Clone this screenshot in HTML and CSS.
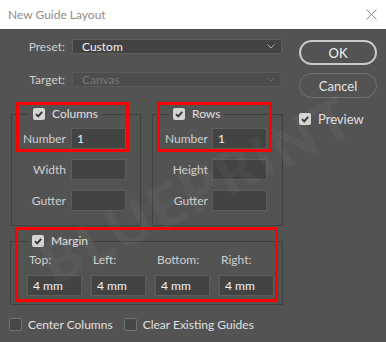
FILE: index.html
```html
<!DOCTYPE html>
<html>
<head>
<meta charset="utf-8">
<link rel="stylesheet" href="styles.css">
</head>
<body>
<div class="titlebar">
  <span class="title">New Guide Layout</span>
  <svg class="close" width="11" height="11" viewBox="0 0 11 11"><path d="M0.5 0.5L10.5 10.5M10.5 0.5L0.5 10.5" stroke="#8a8a8a" stroke-width="1" fill="none"/></svg>
</div>
<div class="content">
  <div class="main">
    <div class="select-row">
      <span class="sel-label">Preset:</span>
      <div class="select">
        <span>Custom</span>
        <svg class="chev" width="8" height="5" viewBox="0 0 8 5"><path d="M0.5 0.5L4 4L7.5 0.5" stroke="#a8a8a8" fill="none"/></svg>
      </div>
    </div>
    <div class="select-row target">
      <span class="sel-label">Target:</span>
      <div class="select disabled">
        <span>Canvas</span>
        <svg class="chev" width="8" height="5" viewBox="0 0 8 5"><path d="M0.5 0.5L4 4L7.5 0.5" stroke="#686868" fill="none"/></svg>
      </div>
    </div>
    <div class="groups">
      <fieldset class="group cols">
        <legend><span class="cb on"><svg width="12" height="12" viewBox="0 0 12 12"><path d="M3 6.2L5.2 8.4L9.2 3.8" stroke="#333" stroke-width="1.8" fill="none"/></svg></span>Columns</legend>
        <div class="field"><span class="flabel">Number</span><span class="input">1</span></div>
        <div class="field"><span class="flabel">Width</span><span class="input"></span></div>
        <div class="field"><span class="flabel">Gutter</span><span class="input"></span></div>
      </fieldset>
      <fieldset class="group rows">
        <legend><span class="cb on"><svg width="12" height="12" viewBox="0 0 12 12"><path d="M3 6.2L5.2 8.4L9.2 3.8" stroke="#333" stroke-width="1.8" fill="none"/></svg></span>Rows</legend>
        <div class="field"><span class="flabel">Number</span><span class="input">1</span></div>
        <div class="field"><span class="flabel">Height</span><span class="input"></span></div>
        <div class="field"><span class="flabel">Gutter</span><span class="input"></span></div>
      </fieldset>
    </div>
    <fieldset class="group margin">
      <legend><span class="cb on"><svg width="12" height="12" viewBox="0 0 12 12"><path d="M3 6.2L5.2 8.4L9.2 3.8" stroke="#333" stroke-width="1.8" fill="none"/></svg></span>Margin</legend>
      <div class="mgrid">
        <span class="mlabel">Top:</span>
        <span class="mlabel">Left:</span>
        <span class="mlabel">Bottom:</span>
        <span class="mlabel">Right:</span>
        <span class="input">4 mm</span>
        <span class="input">4 mm</span>
        <span class="input">4 mm</span>
        <span class="input">4 mm</span>
      </div>
    </fieldset>
    <div class="bottom">
      <span class="check"><span class="cb off"></span>Center Columns</span>
      <span class="check"><span class="cb off"></span>Clear Existing Guides</span>
    </div>
  </div>
  <div class="side">
    <div class="btn ok">OK</div>
    <div class="btn cancel">Cancel</div>
    <span class="check preview"><span class="cb on"><svg width="12" height="12" viewBox="0 0 12 12"><path d="M3 6.2L5.2 8.4L9.2 3.8" stroke="#333" stroke-width="1.8" fill="none"/></svg></span>Preview</span>
  </div>
  <div class="watermark">BLUEPRINT</div>
  <div class="hl hl-cols"></div>
  <div class="hl hl-rows"></div>
  <div class="hl hl-margin"></div>
</div>
</body>
</html>
```
FILE: styles.css
```css
* { box-sizing: border-box; }
html, body {
  margin: 0;
  padding: 0;
}
body {
  width: 386px;
  height: 342px;
  background: #535353;
  font-family: Lato, "Open Sans", sans-serif;
  font-size: 12px;
  color: #d8d8d8;
  overflow: hidden;
}
.titlebar {
  height: 29px;
  background: #ffffff;
  display: flex;
  align-items: center;
  justify-content: space-between;
  padding: 0 9px 0 8px;
}
.title {
  color: #8c8c8c;
  font-size: 12px;
}
.close { display: block; }
.content {
  position: relative;
  display: flex;
  height: 313px;
  overflow: hidden;
}
.main {
  width: 290px;
}
.select-row {
  display: flex;
  align-items: center;
  margin-top: 10px;
  height: 15px;
}
.select-row.target { margin-top: 18px; }
.sel-label {
  width: 65px;
  text-align: right;
  margin-right: 7px;
  color: #cfcfcf;
}
.select {
  width: 210px;
  height: 15px;
  background: #424242;
  border: 1px solid #5e5e5e;
  border-radius: 2px;
  display: flex;
  align-items: center;
  justify-content: space-between;
  padding: 0 6px 0 9px;
  color: #f0f0f0;
  line-height: 13px;
}
.select.disabled {
  background: #4c4c4c;
  border-color: #5a5a5a;
  color: #787878;
}
.chev { display: block; }
.groups {
  display: flex;
  margin-top: 20px;
}
.group {
  margin: 0;
  border: 1px solid #404040;
  padding: 0;
  min-width: 0;
}
.group legend {
  display: flex;
  align-items: center;
  height: 14px;
  line-height: 14px;
  padding: 0 4px;
  color: #e0e0e0;
}
.cols {
  margin-left: 11px;
  width: 130px;
  padding: 7px 0 14px 0;
}
.cols legend { margin-left: 17px; }
.rows {
  margin-left: 11px;
  width: 131px;
  padding: 7px 0 14px 0;
}
.rows legend { margin-left: 16px; }
.field {
  display: flex;
  align-items: center;
  height: 21px;
  margin-bottom: 10px;
}
.field:last-of-type { margin-bottom: 0; }
.flabel {
  text-align: right;
  color: #cfcfcf;
}
.cols .flabel { width: 54px; margin-right: 5px; }
.rows .flabel { width: 55px; margin-right: 4px; }
.input {
  display: flex;
  align-items: center;
  width: 55px;
  height: 21px;
  background: #434343;
  border: 1px solid #5d5d5d;
  padding-left: 5px;
  color: #f2f2f2;
}
.margin {
  margin: 8px 0 0 10px;
  width: 273px;
  padding: 5px 0 8px 16px;
}
.margin legend { margin-left: 1px; }
.mgrid {
  display: grid;
  grid-template-columns: repeat(4, 55px);
  column-gap: 9px;
  row-gap: 8px;
}
.mlabel {
  height: 14px;
  line-height: 14px;
  padding-left: 2px;
  color: #cfcfcf;
}
.cb {
  display: inline-flex;
  align-items: center;
  justify-content: center;
  width: 12px;
  height: 12px;
  border-radius: 2px;
  margin-right: 7px;
  flex: none;
}
.cb.on { background: #d4d4d4; }
.cb.on svg { display: block; }
.cb.off {
  background: #474747;
  border: 1px solid #727272;
  width: 13px;
  height: 13px;
  margin-right: 6px;
}
.check {
  display: inline-flex;
  align-items: center;
  color: #e0e0e0;
}
.bottom {
  display: flex;
  align-items: center;
  margin: 13px 0 0 9px;
  height: 13px;
}
.bottom .check + .check { margin-left: 11px; }
.side {
  padding: 11px 0 0 9px;
  display: flex;
  flex-direction: column;
  align-items: flex-start;
}
.btn {
  width: 78px;
  height: 25px;
  border-radius: 13px;
  display: flex;
  align-items: center;
  justify-content: center;
  font-size: 13px;
}
.btn.ok {
  border: 2px solid #c9c9c9;
  color: #f4f4f4;
}
.btn.cancel {
  margin-top: 8px;
  border: 1px solid #707070;
  color: #e4e4e4;
}
.preview {
  margin-top: 13px;
  font-size: 13px;
}
.watermark {
  position: absolute;
  left: 25px;
  top: 125px;
  font-size: 58px;
  font-weight: 900;
  letter-spacing: 3px;
  color: rgba(255, 255, 255, 0.035);
  transform: rotate(-27deg);
  transform-origin: center;
  pointer-events: none;
  white-space: nowrap;
}
.hl {
  position: absolute;
  border: 3px solid #ff0000;
}
.hl-cols { left: 16px; top: 73px; width: 113px; height: 50px; }
.hl-rows { left: 157px; top: 73px; width: 115px; height: 50px; }
.hl-margin { left: 15px; top: 198px; width: 263px; height: 75px; }
```
